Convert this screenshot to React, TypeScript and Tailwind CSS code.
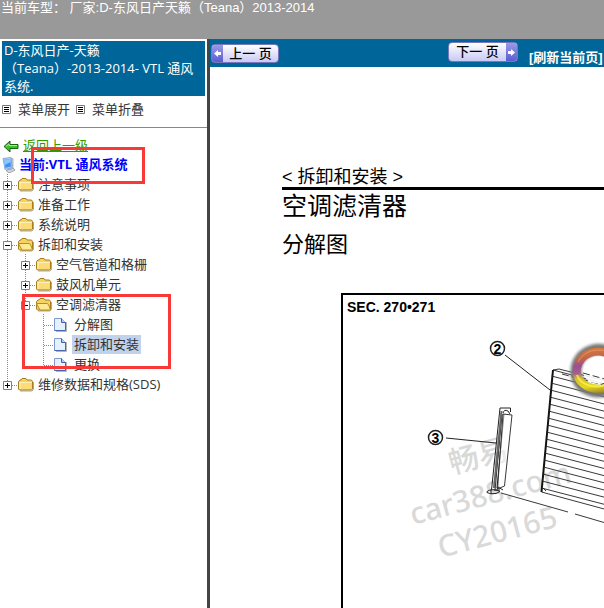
import { useState } from 'react'

type TreeNode = {
  label: string
  leaf?: boolean
  open?: boolean
  selected?: boolean
  children?: TreeNode[]
}

const tree: TreeNode[] = [
  { label: '注意事项' },
  { label: '准备工作' },
  { label: '系统说明' },
  {
    label: '拆卸和安装',
    open: true,
    children: [
      { label: '空气管道和格栅' },
      { label: '鼓风机单元' },
      {
        label: '空调滤清器',
        open: true,
        children: [
          { label: '分解图', leaf: true },
          { label: '拆卸和安装', leaf: true, selected: true },
          { label: '更换', leaf: true },
        ],
      },
    ],
  },
  { label: '维修数据和规格(SDS)' },
]

// left edge of each filter slat, top to bottom
const slats = Array.from({ length: 17 }, (_, i) => {
  const y = 376 + i * 7
  return { x: 551.5 - (y - 376) * 0.09, y }
})

const FolderIcon = ({ open }: { open?: boolean }) => (
  <svg width="16" height="16" viewBox="0 0 16 16" className="shrink-0">
    <path d="M2 15h12l1.500-1.500V6" fill="none" stroke="#a8a8a8" />
    <path d="M.5 5.500l1.500-1.500h1l1-1.500h4l1 1.500h4.500l1 1.500v7.500l-1 1H1.500l-1-1z" fill="#f6d264" stroke="#a87f1c" />
    {open ? (
      <path d="M.5 7.500h10.500l1.500 1 2 5.500H4z" fill="#ffe993" stroke="#b98e1e" />
    ) : (
      <>
        <path d="M1.500 6h12v7h-12z" fill="#fbdc78" />
        <path d="M1.500 6.500h12M2 7v6" fill="none" stroke="#fff3b8" />
      </>
    )}
  </svg>
)

const FileIcon = () => (
  <svg width="16" height="16" viewBox="0 0 16 16" className="shrink-0">
    <path d="M2 15.500h10.500V6" fill="none" stroke="#b5b5b5" />
    <path d="M.5 2.500h7l4 4v8H.5z" fill="#e6f0ff" stroke="#7d9bcf" />
    <path d="M7.500 2.500v4h4" fill="#b9cdf0" stroke="#3c62ac" />
    <path d="M11.500 6.500v8H.5" fill="none" stroke="#4467ad" />
  </svg>
)

const Guide = ({ shown, branch, last }: { shown: boolean; branch?: boolean; last?: boolean }) => (
  <svg width="18" height="20" viewBox="0 0 18 20" className="shrink-0" stroke="#888" strokeDasharray="1 1">
    {shown && <path d={last ? 'M7.5 0V11' : 'M7.5 0V20'} />}
    {branch && <path d="M8 11.5H18" />}
  </svg>
)

const TreeItem = ({ node, last, lines }: { node: TreeNode; last: boolean; lines: boolean[] }) => {
  const [open, setOpen] = useState(!!node.open)

  return (
    <li>
      <div className="flex h-5 items-center">
        {lines.map((shown, i) => (
          <Guide key={i} shown={shown} />
        ))}
        {node.leaf ? (
          <Guide shown branch last={last} />
        ) : (
          <button
            type="button"
            aria-label={node.label}
            aria-expanded={open}
            onClick={() => setOpen(!open)}
            className="h-5 w-[18px] shrink-0"
          >
            <svg width="18" height="20" viewBox="0 0 18 20">
              <path d={last ? 'M7.5 0V11' : 'M7.5 0V20'} stroke="#888" strokeDasharray="1 1" />
              <path d="M12 11.500H18" stroke="#888" strokeDasharray="1 1" />
              <path d="M3.500 7.500h8v8h-8z" fill="#fff" stroke="#808080" />
              <path d={open ? 'M5 11.5h5' : 'M5 11.5h5M7.5 9v5'} stroke="#000" />
            </svg>
          </button>
        )}
        {node.leaf ? <FileIcon /> : <FolderIcon open={open} />}
        <a
          href="#"
          className={`ml-0.5 px-0.5 text-[13px] leading-[19px] whitespace-nowrap text-[#333] ${
            node.selected ? 'bg-[#c0d2ec]' : ''
          }`}
        >
          {node.label}
        </a>
      </div>
      {open && node.children && (
        <ul>
          {node.children.map((child, i) => (
            <TreeItem
              key={child.label}
              node={child}
              last={i === node.children!.length - 1}
              lines={[...lines, !last]}
            />
          ))}
        </ul>
      )}
    </li>
  )
}

const MenuIcon = () => (
  <svg width="10" height="10" viewBox="0 0 10 10" className="shrink-0">
    <path d="M.5 .5h8v8h-8z" fill="#fff" stroke="#777" />
    <path d="M2 2.500h5M2 4.500h5M2 6.500h5" stroke="#000" />
  </svg>
)

const PageArrow = ({ next }: { next?: boolean }) => (
  <span className="flex h-full w-[11px] items-center justify-center bg-linear-to-b from-[#9a9ae8] to-[#5c5cd0]">
    <svg width="9" height="9" viewBox="0 0 9 9" fill="#fff">
      {next ? <path d="M1 3h3V1l4 3.500L4 8V6H1z" /> : <path d="M8 3H5V1L1 4.500 5 8V6h3z" />}
    </svg>
  </span>
)

const Sidebar = () => (
  <aside className="relative w-[210px] shrink-0 border-r-[3px] border-[#444] bg-white font-['Open_Sans','Noto_Sans_CJK_SC',sans-serif] text-[13px]">
    <div className="mx-0.5 mt-0.5 bg-[#006699] px-0.5 pb-px leading-[18px] whitespace-nowrap text-white">
      D-东风日产-天籁
      <br />
      （Teana）-2013-2014- VTL 通风
      <br />
      系统.
    </div>
    <div className="flex h-8 items-center gap-1.5 border-b border-[#888] px-0.5 pb-1 text-[#333]">
      <a href="#" className="flex items-center gap-1.5">
        <MenuIcon />
        菜单展开
      </a>
      <a href="#" className="flex items-center gap-1.5">
        <MenuIcon />
        菜单折叠
      </a>
    </div>
    <div className="mt-2 flex h-[19px] items-center gap-1 pl-[3px]">
      <svg width="16" height="14" viewBox="0 0 16 14" className="shrink-0">
        <path d="M1 7.500l6-5.500V5.500h8v4H7V13z" fill="#3fbf2c" stroke="#14650f" />
        <path d="M3 7.500l3-2.500V6.500h8" fill="none" stroke="#a4f08a" />
      </svg>
      <a href="#" className="text-[#339900] underline">
        返回上一级
      </a>
    </div>
    <div className="flex h-[19px] items-center gap-[3px] pl-0.5">
      <svg width="14" height="16" viewBox="0 0 14 16" className="shrink-0">
        <path d="M4 13.500l7-2.500 2 2-6 3z" fill="#d8d8d8" stroke="#a0a0a0" />
        <path d="M8 2l3-.5v9.500l-3 2z" fill="#c9d3e2" stroke="#8a98ad" strokeWidth="0.7" />
        <path d="M1 1.500l8-1 1 10-7 2z" fill="#b5d5fa" stroke="#6f9bd6" strokeWidth="0.8" />
        <path d="M2.200 2.700L8.200 2l.8 7.500-5.500 1.500z" fill="#3f91ec" />
        <path d="M2.200 2.700L8.200 2l.4 3-6 3z" fill="#8cc6ff" />
      </svg>
      <a href="#" className="font-bold whitespace-nowrap text-[#0000ff]">
        当前:VTL 通风系统
      </a>
    </div>
    <ul>
      {tree.map((node, i) => (
        <TreeItem key={node.label} node={node} last={i === tree.length - 1} lines={[]} />
      ))}
    </ul>

    {/* highlight frames */}
    <div className="pointer-events-none absolute top-[108px] left-[31px] h-[37px] w-[114px] border-[3px] border-[#f93838]" />
    <div className="pointer-events-none absolute top-[255px] left-[22px] h-[75px] w-[149px] border-[3px] border-[#f93838]" />
  </aside>
)

const Diagram = () => (
  <svg width="520" height="420" viewBox="343 295 520 420" className="max-w-none" fill="none" stroke="#222">
    <defs>
      <linearGradient id="ring" x1="584" y1="349" x2="590" y2="395" gradientUnits="userSpaceOnUse">
        <stop offset="0.05" stopColor="#d2763e" />
        <stop offset="0.22" stopColor="#c0644c" />
        <stop offset="0.34" stopColor="#9c4f92" />
        <stop offset="0.5" stopColor="#a35f8c" />
        <stop offset="0.62" stopColor="#d8c030" />
        <stop offset="0.82" stopColor="#e6d81e" />
        <stop offset="1" stopColor="#978428" />
      </linearGradient>
      <filter id="soft" x="-40%" y="-40%" width="180%" height="180%">
        <feGaussianBlur stdDeviation="1.5" />
      </filter>
    </defs>

    <g
      fill="#d9d9d9"
      stroke="none"
      fontFamily="'Noto Sans', 'Noto Sans CJK SC', sans-serif"
      fontSize="30"
      fontWeight="500"
    >
      <text transform="translate(452 474) rotate(-15)">畅易</text>
      <text transform="translate(413 525) rotate(-15)">car388.com</text>
      <text transform="translate(441 558) rotate(-15)">CY20165</text>
    </g>

    <g fontFamily="'Liberation Sans', Arial, sans-serif" fontWeight="bold" textAnchor="middle" fontSize="14">
      <circle cx="497.500" cy="348.500" r="7" strokeWidth="1.500" />
      <text x="497.500" y="353.500" fill="#000" stroke="none">2</text>
      <circle cx="435.500" cy="437.500" r="7" strokeWidth="1.500" />
      <text x="435.500" y="442.500" fill="#000" stroke="none">3</text>
    </g>
    <path d="M505 355L550 390M446 438L496 443" />

    {/* side cover */}
    <path d="M500 408h10.500v4M500 408L491.500 490M502 414L495 490M504 414L497 488" />
    <path d="M501.500 411L494 488" stroke="#666" strokeWidth="2" />
    <path d="M503 414l9 1L504.500 486l-7 3z" fill="#fff" fillOpacity="0.5" strokeWidth="0.9" />
    <path d="M503 413q1-4 5-2l2 3M487 491.500q4-3 11-1l2 1-4 2q-6 1-9-1zM491 490v4M498 487l5 3M500 490h-6" />
    <path d="M501 493L568 512M575 514L604 522.500L700 551" strokeWidth="0.9" />

    {/* filter element */}
    <path d="M553 370L541.500 492" stroke="#111" strokeWidth="2" />
    <g strokeWidth="0.9">
      <path d="M553 370l6-1L700 405M553 370L700 409M541.500 492L700 535M543 488L546 491" />
      <path d="M562 374L700 411" strokeDasharray="7 3" />
      {slats.map((s) => (
        <path key={s.y} d={`M${s.x} ${s.y}l150 39`} />
      ))}
    </g>

    {/* round emblem */}
    <path d="M612 353C594 343 576 355 576 371C576 387 592 397 612 389" stroke="#777" strokeWidth="11" filter="url(#soft)" />
    <path d="M612 362C598 350 584 360 583 371C583 381 596 388 612 380z" fill="#fff" fillOpacity="0.9" stroke="none" />
    <path d="M583 373L612 381" strokeDasharray="7 3" strokeWidth="0.9" />
    <path d="M612 356C597 346 580 354 577 368C574 383 592 394 612 386" stroke="url(#ring)" strokeWidth="8" />
    <path d="M608 352C596 347 583 352 578 362" stroke="#efa070" opacity="0.7" />
    <path d="M577 375C580 384 592 389 606 385" stroke="#fff04a" strokeWidth="2" opacity="0.8" />
  </svg>
)

const Content = () => (
  <main className="min-w-0 flex-1 overflow-hidden bg-white">
    <nav className="flex h-7 items-start bg-[#006699] pl-px text-[13px] font-bold whitespace-nowrap">
      <button
        type="button"
        className="mt-[5px] flex h-[19px] w-[68px] shrink-0 overflow-hidden rounded-sm border border-[#7777bb] bg-linear-to-b from-white to-[#c9c9f5] font-medium text-black"
      >
        <PageArrow />
        <span className="flex-1 text-center leading-[17px]">上一 页</span>
      </button>
      <button
        type="button"
        className="mt-[3px] ml-[169px] flex h-5 w-[70px] shrink-0 overflow-hidden rounded-sm border border-[#7777bb] bg-linear-to-b from-white to-[#c9c9f5] font-medium text-black"
      >
        <span className="flex-1 text-center leading-[17px]">下一 页</span>
        <PageArrow next />
      </button>
      <a href="#" className="mt-2.5 ml-[11px] leading-[18px] text-white">
        [刷新当前页]
      </a>
    </nav>

    <article className="pt-[100px] pl-[72px] text-black">
      <p className="border-b-[3px] border-black text-[18px] leading-5 whitespace-nowrap">&lt; 拆卸和安装 &gt;</p>
      <h1 className="text-[25px] leading-8 whitespace-nowrap">空调滤清器</h1>
      <h2 className="mt-[7px] text-[22px] leading-8 whitespace-nowrap">分解图</h2>
      <figure className="mt-8 ml-[59px] border-t-2 border-l-2 border-black">
        <figcaption className="h-0 pl-1 text-[14px] leading-6 font-bold whitespace-nowrap">SEC. 270•271</figcaption>
        <Diagram />
      </figure>
    </article>
  </main>
)

const App = () => (
  <div className="flex h-screen flex-col overflow-hidden bg-white font-['Liberation_Sans','Noto_Sans_CJK_SC',sans-serif]">
    <header className="h-[39px] shrink-0 bg-[#999] pl-px text-[13px] leading-4 whitespace-pre text-white">
      当前车型： 厂家:D-东风日产天籁（Teana）2013-2014
    </header>
    <div className="flex min-h-0 flex-1">
      <Sidebar />
      <Content />
    </div>
  </div>
)

export default App
